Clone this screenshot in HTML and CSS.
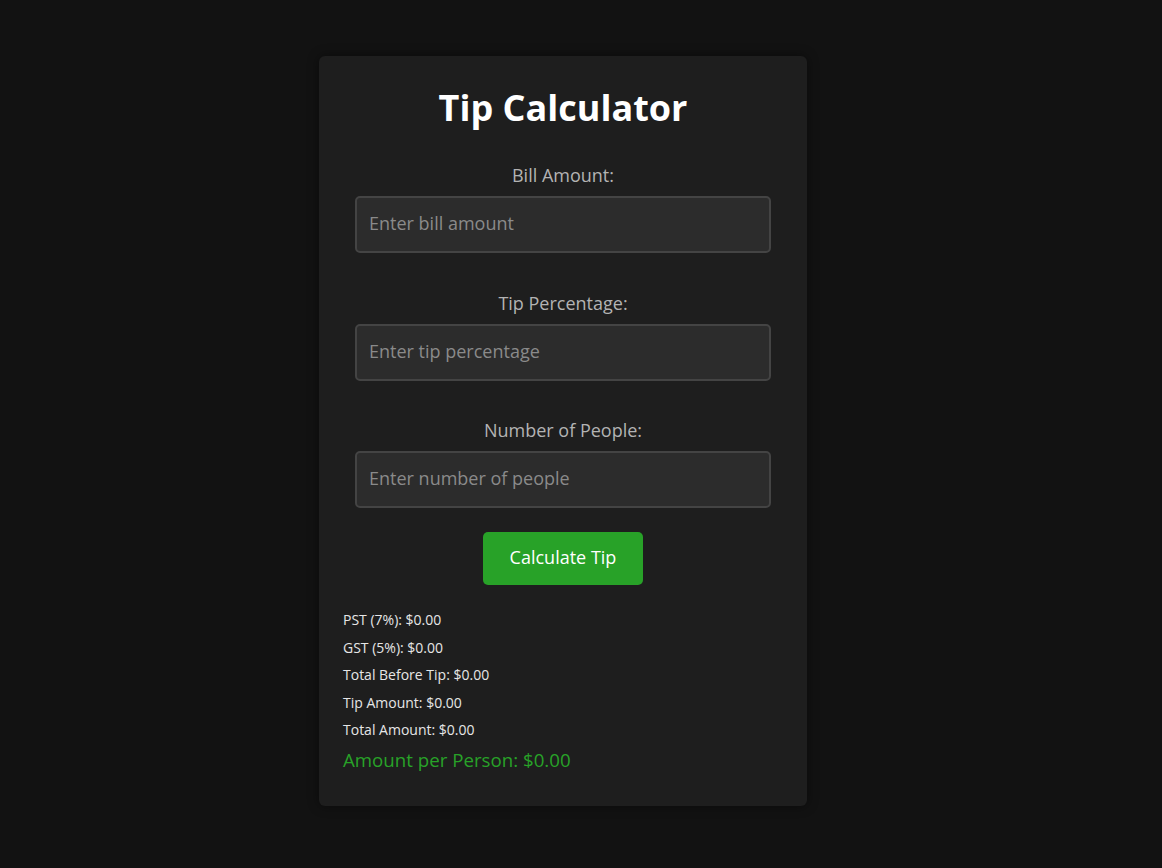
FILE: index.html
```html
<!DOCTYPE html>
<html lang="en">
<head>
<meta charset="utf-8">
<title>Tip Calculator</title>
<link rel="stylesheet" href="styles.css">
</head>
<body>
<main class="card">
  <h1 class="title">Tip Calculator</h1>
  <div class="field">
    <label class="label" for="bill">Bill Amount:</label>
    <input class="input" id="bill" type="text" placeholder="Enter bill amount">
  </div>
  <div class="field">
    <label class="label" for="tip">Tip Percentage:</label>
    <input class="input" id="tip" type="text" placeholder="Enter tip percentage">
  </div>
  <div class="field field-last">
    <label class="label" for="people">Number of People:</label>
    <input class="input" id="people" type="text" placeholder="Enter number of people">
  </div>
  <button class="btn" type="button">Calculate Tip</button>
  <div class="results">
    <p class="line">PST (7%): $0.00</p>
    <p class="line">GST (5%): $0.00</p>
    <p class="line">Total Before Tip: $0.00</p>
    <p class="line">Tip Amount: $0.00</p>
    <p class="line">Total Amount: $0.00</p>
    <p class="per-person">Amount per Person: $0.00</p>
  </div>
</main>
</body>
</html>
```

FILE: styles.css
```css
* { box-sizing: border-box; }
html, body { margin: 0; padding: 0; }
body {
  background: #121212;
  font-family: "Open Sans", "Noto Sans", sans-serif;
  color: #e0e0e0;
  display: flex;
  justify-content: center;
  padding: 56px 36px 0 0;
  min-height: 868px;
}
.card {
  width: 488px;
  height: 750px;
  background: #1e1e1e;
  border-radius: 6px;
  box-shadow: 0 0 12px rgba(0,0,0,0.45);
  padding: 30px 24px 24px;
  display: flex;
  flex-direction: column;
  align-items: center;
}
.title {
  margin: 0 0 34px;
  font-size: 36px;
  font-weight: 700;
  line-height: 43px;
  color: #ffffff;
  text-align: center;
}
.field {
  display: flex;
  flex-direction: column;
  align-items: center;
  margin-bottom: 37.5px;
}
.field-last { margin-bottom: 24px; }
.label {
  font-size: 18px;
  line-height: 24px;
  color: #b3b3b3;
  margin-bottom: 9px;
}
.input {
  width: 416px;
  height: 57px;
  background: #2c2c2c;
  border: 2px solid #444444;
  border-radius: 5px;
  padding: 0 12px 3px;
  font-family: inherit;
  font-size: 18px;
  color: #e0e0e0;
  outline: none;
}
.input::placeholder { color: #8a8a8a; }
.btn {
  width: 160px;
  height: 53px;
  padding: 0 0 4px;
  background: #28a228;
  color: #ffffff;
  border: none;
  border-radius: 5px;
  font-family: inherit;
  font-size: 18px;
  cursor: pointer;
}
.results {
  align-self: stretch;
  margin-top: 25px;
}
.line {
  margin: 0 0 8px;
  font-size: 14px;
  line-height: 19.5px;
  color: #e6e6e6;
}
.per-person {
  margin: 0;
  font-size: 18.7px;
  line-height: 24px;
  color: #28a228;
}
```
